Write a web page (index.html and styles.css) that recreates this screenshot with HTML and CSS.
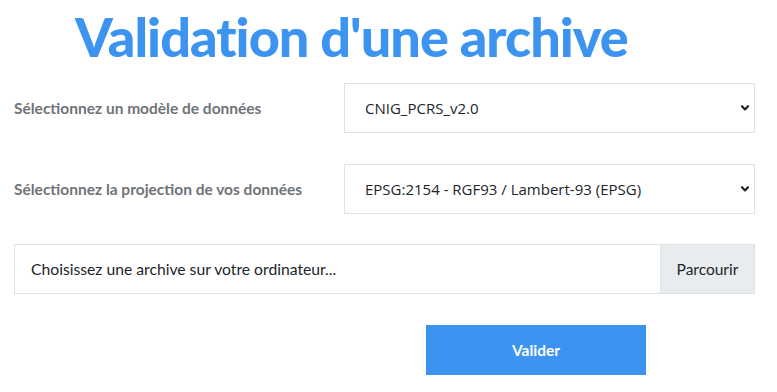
FILE: index.html
```html
<!DOCTYPE html>
<html lang="fr">
<head>
<meta charset="utf-8">
<title>Validation d'une archive</title>
<link rel="stylesheet" href="styles.css">
</head>
<body>
<main class="page">
  <h1 class="title">Validation d'une archive</h1>
  <form class="form">
    <div class="row">
      <label class="label" for="model">Sélectionnez un modèle de données</label>
      <div class="select-wrap">
        <select id="model" class="select">
          <option>CNIG_PCRS_v2.0</option>
        </select>
        <svg class="chevron" width="8" height="6" viewBox="0 0 8 6"><path d="M1 1.2 L4 4.4 L7 1.2" fill="none" stroke="#212529" stroke-width="2.2" stroke-linecap="round" stroke-linejoin="round"/></svg>
      </div>
    </div>
    <div class="row">
      <label class="label" for="proj">Sélectionnez la projection de vos données</label>
      <div class="select-wrap">
        <select id="proj" class="select">
          <option>EPSG:2154 - RGF93 / Lambert-93 (EPSG)</option>
        </select>
        <svg class="chevron" width="8" height="6" viewBox="0 0 8 6"><path d="M1 1.2 L4 4.4 L7 1.2" fill="none" stroke="#212529" stroke-width="2.2" stroke-linecap="round" stroke-linejoin="round"/></svg>
      </div>
    </div>
    <div class="file">
      <span class="file-text">Choisissez une archive sur votre ordinateur...</span>
      <span class="file-btn">Parcourir</span>
    </div>
    <div class="actions">
      <button type="button" class="submit">Valider</button>
    </div>
  </form>
</main>
</body>
</html>
```
FILE: styles.css
```css
* { box-sizing: border-box; }
html, body { margin: 0; padding: 0; background: #fff; }
body { font-family: Lato, "Open Sans", sans-serif; color: #212529; }

.page { padding: 0 22px 0 14px; }

.title {
  margin: 0 0 0 61px;
  padding-top: 6px;
  height: 83px;
  font-family: Lato, sans-serif;
  font-weight: 900;
  font-size: 54px;
  line-height: 62px;
  color: #3c94f0;
  letter-spacing: -1px;
}

.form { display: flex; flex-direction: column; }

.row {
  display: grid;
  grid-template-columns: 330px 1fr;
  align-items: center;
  height: 50px;
  margin-bottom: 31px;
}
.row + .row { margin-bottom: 30px; }

.label {
  font-family: Lato, sans-serif;
  font-weight: 700;
  font-size: 15.5px;
  color: #707378;
}

.select-wrap { position: relative; height: 50px; }
.select {
  appearance: none;
  -webkit-appearance: none;
  width: 100%;
  height: 50px;
  border: 1px solid #dee2e6;
  border-radius: 0;
  background: #fff;
  padding: 0 30px 0 20px;
  font-family: "Open Sans", sans-serif;
  font-size: 15px;
  color: #212529;
  outline: none;
}
.chevron { position: absolute; right: 6px; top: 22px; }

.file {
  display: flex;
  height: 50px;
  border: 1px solid #dee2e6;
  margin-bottom: 31px;
}
.file-text {
  flex: 1;
  display: flex;
  align-items: center;
  padding-left: 16px;
  font-family: Lato, sans-serif;
  font-size: 15.7px;
  color: #212529;
}
.file-btn {
  width: 94px;
  display: flex;
  align-items: center;
  justify-content: center;
  background: #e9ecef;
  border-left: 1px solid #dee2e6;
  font-family: Lato, sans-serif;
  font-size: 15.5px;
  color: #212529;
}

.actions { padding-left: 412px; }
.submit {
  width: 220px;
  height: 50px;
  border: 0;
  border-radius: 0;
  background: #3c94f0;
  color: #fff;
  font-family: Lato, sans-serif;
  font-weight: 700;
  font-size: 15.5px;
}
```
